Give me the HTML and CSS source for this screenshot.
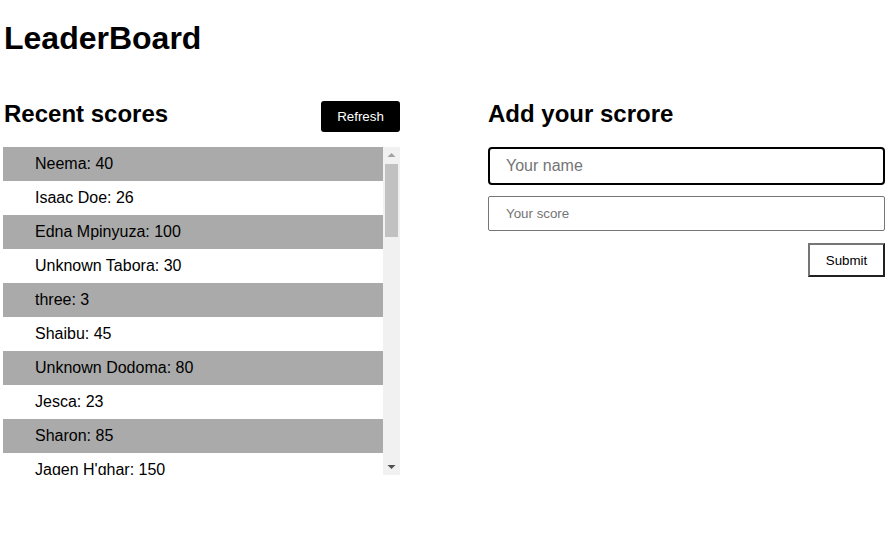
FILE: index.html
```html
<!DOCTYPE html>
<html lang="en">
<head>
<meta charset="utf-8">
<title>LeaderBoard</title>
<link rel="stylesheet" href="styles.css">
</head>
<body>
<header class="top">
  <h1 class="title">LeaderBoard</h1>
</header>
<main class="board">
  <section class="scores">
    <div class="scores-head">
      <h2 class="heading">Recent scores</h2>
      <button class="btn-refresh" type="button">Refresh</button>
    </div>
    <div class="list-frame">
      <ul class="score-list">
        <li class="row">Neema: 40</li>
        <li class="row">Isaac Doe: 26</li>
        <li class="row">Edna Mpinyuza: 100</li>
        <li class="row">Unknown Tabora: 30</li>
        <li class="row">three: 3</li>
        <li class="row">Shaibu: 45</li>
        <li class="row">Unknown Dodoma: 80</li>
        <li class="row">Jesca: 23</li>
        <li class="row">Sharon: 85</li>
        <li class="row">Jagen H'ghar: 150</li>
      </ul>
      <div class="vscroll" aria-hidden="true">
        <div class="vscroll-btn">
          <svg width="17" height="17" viewBox="0 0 17 17"><polygon points="4.5,10 12.5,10 8.5,6" fill="#a3a3a3"/></svg>
        </div>
        <div class="vscroll-track">
          <div class="vscroll-thumb"></div>
        </div>
        <div class="vscroll-btn">
          <svg width="17" height="17" viewBox="0 0 17 17"><polygon points="4.5,7 12.5,7 8.5,11" fill="#505050"/></svg>
        </div>
      </div>
    </div>
  </section>
  <section class="add">
    <h2 class="heading">Add your scrore</h2>
    <form class="add-form">
      <input class="field field-name" type="text" placeholder="Your name" autofocus>
      <input class="field field-score" type="text" placeholder="Your score">
      <div class="form-actions">
        <button class="btn-submit" type="button">Submit</button>
      </div>
    </form>
  </section>
</main>
</body>
</html>
```

FILE: styles.css
```css
* {
  box-sizing: border-box;
}

html, body {
  margin: 0;
  padding: 0;
  background: #fff;
  color: #000;
  font-family: "Liberation Sans", Arial, sans-serif;
}

body {
  padding: 0 3px;
}

.top {
  padding: 20px 1px 0;
}

.title {
  margin: 0;
  font-size: 32px;
  font-weight: bold;
  line-height: 37px;
}

.board {
  display: grid;
  grid-template-columns: 397px 397px;
  column-gap: 88px;
  margin-top: 43px;
}

.scores-head {
  display: flex;
  justify-content: space-between;
  align-items: flex-start;
  padding-left: 1px;
}

.heading {
  margin: 0;
  font-size: 24px;
  font-weight: bold;
  line-height: 28px;
}

.btn-refresh {
  width: 79px;
  height: 31px;
  margin-top: 1px;
  border: none;
  border-radius: 3px;
  background: #000;
  color: #fff;
  font-family: "Liberation Sans", Arial, sans-serif;
  font-size: 13.33px;
  padding: 0;
}

.list-frame {
  display: flex;
  margin-top: 15px;
  height: 328px;
}

.score-list {
  flex: 1;
  list-style: none;
  margin: 0;
  padding: 0;
  overflow: hidden;
}

.row {
  height: 34px;
  line-height: 34px;
  padding-left: 32px;
  font-size: 16px;
}

.row:nth-child(odd) {
  background: #aaa;
}

.vscroll {
  width: 17px;
  display: flex;
  flex-direction: column;
  background: #f1f1f1;
}

.vscroll-btn {
  height: 17px;
  flex: none;
}

.vscroll-btn svg {
  display: block;
}

.vscroll-track {
  flex: 1;
  padding: 0 2px;
}

.vscroll-thumb {
  height: 73px;
  background: #c1c1c1;
}

.add-form {
  display: flex;
  flex-direction: column;
  margin-top: 19px;
}

.field {
  width: 100%;
  font-family: "Liberation Sans", Arial, sans-serif;
  background: #fff;
  color: #000;
  caret-color: #000;
  outline: none;
}

.field::placeholder {
  color: #757575;
}

.field-name {
  height: 38px;
  border: 2px solid #000;
  border-radius: 4px;
  padding: 0 16px;
  font-size: 16px;
}

.field-score {
  height: 35px;
  margin-top: 11px;
  border: 1px solid #767676;
  border-radius: 2px;
  padding: 0 17px;
  font-size: 13.33px;
}

.form-actions {
  display: flex;
  justify-content: flex-end;
  margin-top: 12px;
}

.btn-submit {
  width: 77px;
  height: 34px;
  border: 2px outset #767676;
  background: #fff;
  color: #000;
  font-family: "Liberation Sans", Arial, sans-serif;
  font-size: 13.33px;
  padding: 0;
}
```
